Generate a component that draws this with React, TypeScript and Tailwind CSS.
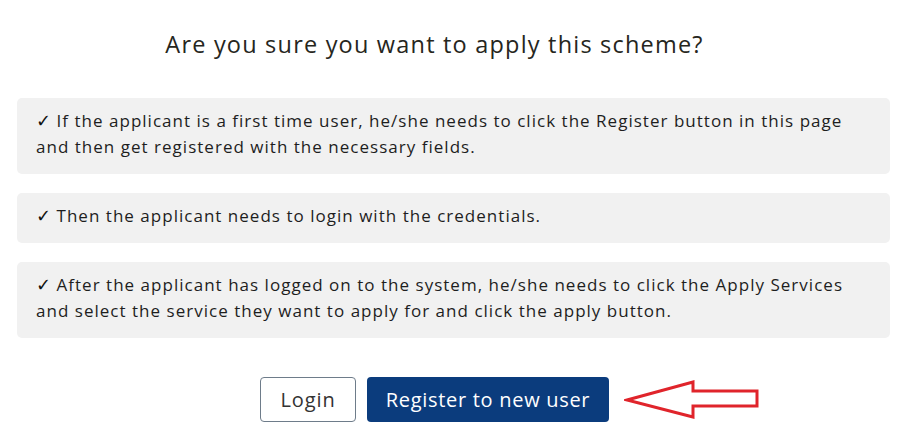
import React from "react";

const items: string[][] = [
  [
    "If the applicant is a first time user, he/she needs to click the Register button in this page",
    "and then get registered with the necessary fields.",
  ],
  ["Then the applicant needs to login with the credentials."],
  [
    "After the applicant has logged on to the system, he/she needs to click the Apply Services",
    "and select the service they want to apply for and click the apply button.",
  ],
];

export default function App() {
  return (
    <div
      className="w-[900px] h-[435px] bg-white overflow-hidden flex flex-col"
      style={{ fontFamily: '"Open Sans", "Noto Sans", sans-serif' }}
    >
      <div className="w-[869px] pt-[28px] h-[98px] flex justify-center">
        <h2 className="text-[23.5px] leading-[32px] text-[#262620] font-normal tracking-[1.2px]">
          Are you sure you want to apply this scheme?
        </h2>
      </div>
      <div className="flex flex-col gap-[19px] ml-[17px] w-[873px]">
        {items.map((lines, i) => (
          <div
            key={i}
            className="bg-[#f1f1f1] rounded-[5px] px-[19px] pt-[10px] pb-[14px] text-[17px] leading-[26px] text-[#1e1e1e] tracking-[1.02px]"
          >
            {lines.map((l, j) => (
              <div key={j} className="whitespace-nowrap">
                {j === 0 ? (
                  <>
                    <span
                      className="font-bold text-[18px] text-[#111] tracking-normal"
                      style={{ fontFamily: '"DejaVu Sans", sans-serif' }}
                    >
                      ✓
                    </span>{" "}
                    {l}
                  </>
                ) : (
                  l
                )}
              </div>
            ))}
          </div>
        ))}
      </div>
      <div className="relative w-[869px] mt-[39px] flex justify-center gap-[11px]">
        <button className="h-[45px] w-[96px] border border-[#6e7c8a] rounded-[4px] text-[20px] tracking-[0.9px] text-[#333] bg-white">
          Login
        </button>
        <button className="h-[45px] w-[242px] rounded-[4px] bg-[#0b3c7d] text-[20px] tracking-[0.7px] text-white">
          Register to new user
        </button>
        <svg
          className="absolute left-[624px] top-[2px]"
          width="140"
          height="42"
          viewBox="624 380 140 42"
        >
          <polygon
            points="627,401 693,383 693,392 757,392 757,407 693,407 693,418"
            fill="none"
            stroke="#e0242b"
            strokeWidth="3"
            strokeLinejoin="miter"
          />
        </svg>
      </div>
    </div>
  );
}
